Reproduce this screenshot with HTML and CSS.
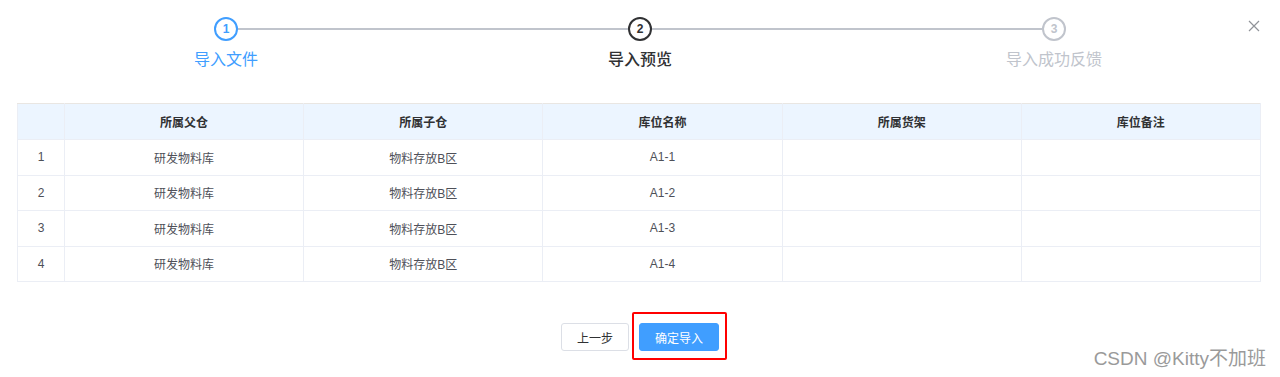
FILE: index.html
```html
<!DOCTYPE html>
<html lang="zh-CN">
<head>
    <meta charset="UTF-8">
    <meta name="viewport" content="width=device-width, initial-scale=1.0">
    <title>导入预览</title>
    <link rel="stylesheet" href="styles.css">
</head>
<body>
    <div class="dialog">
        <button class="close-btn" aria-label="关闭">
            <svg width="12" height="12" viewBox="0 0 12 12">
                <path d="M1 1 L11 11 M11 1 L1 11" stroke="#909399" stroke-width="1.2" fill="none"/>
            </svg>
        </button>

        <div class="steps">
            <div class="step finish">
                <div class="step-head">
                    <div class="step-line"></div>
                    <div class="step-icon">1</div>
                </div>
                <div class="step-title">导入文件</div>
            </div>
            <div class="step process">
                <div class="step-head">
                    <div class="step-line"></div>
                    <div class="step-icon">2</div>
                </div>
                <div class="step-title">导入预览</div>
            </div>
            <div class="step wait">
                <div class="step-head">
                    <div class="step-icon">3</div>
                </div>
                <div class="step-title">导入成功反馈</div>
            </div>
        </div>

        <table class="preview-table">
            <colgroup>
                <col class="col-index">
                <col><col><col><col><col>
            </colgroup>
            <thead>
                <tr>
                    <th></th>
                    <th>所属父仓</th>
                    <th>所属子仓</th>
                    <th>库位名称</th>
                    <th>所属货架</th>
                    <th>库位备注</th>
                </tr>
            </thead>
            <tbody>
                <tr><td>1</td><td>研发物料库</td><td>物料存放B区</td><td>A1-1</td><td></td><td></td></tr>
                <tr><td>2</td><td>研发物料库</td><td>物料存放B区</td><td>A1-2</td><td></td><td></td></tr>
                <tr><td>3</td><td>研发物料库</td><td>物料存放B区</td><td>A1-3</td><td></td><td></td></tr>
                <tr><td>4</td><td>研发物料库</td><td>物料存放B区</td><td>A1-4</td><td></td><td></td></tr>
            </tbody>
        </table>

        <div class="footer-btns">
            <button class="btn">上一步</button>
            <button class="btn btn-primary marked">确定导入</button>
        </div>
    </div>

    <div class="watermark">CSDN @Kitty不加班</div>
</body>
</html>
```

FILE: styles.css
```css
html, body {
    margin: 0;
    padding: 0;
    background: #fff;
    font-family: "Liberation Sans", "Noto Sans CJK SC", sans-serif;
    color: #606266;
}
*, *::before, *::after {
    box-sizing: border-box;
}
.dialog {
    position: relative;
    width: 1280px;
    height: 377px;
    padding: 17px 19px 0 17px;
}
.close-btn {
    position: absolute;
    top: 20px;
    right: 20px;
    width: 12px;
    height: 12px;
    padding: 0;
    border: none;
    background: none;
    line-height: 0;
}

/* steps */
.steps {
    display: flex;
    margin-left: 2px;
}
.step {
    flex: 1 1 0;
    display: flex;
    flex-direction: column;
    align-items: center;
}
.step-head {
    position: relative;
    width: 100%;
    height: 24px;
    display: flex;
    justify-content: center;
}
.step-line {
    position: absolute;
    top: 11px;
    left: 50%;
    right: -50%;
    height: 2px;
    background: #c0c4cc;
}
.step-icon {
    position: relative;
    z-index: 1;
    width: 24px;
    height: 24px;
    border: 2px solid;
    border-radius: 50%;
    background: #fff;
    font-size: 12px;
    font-weight: bold;
    line-height: 20px;
    text-align: center;
}
.step-title {
    font-size: 16px;
    line-height: 38px;
}
.finish .step-icon, .finish .step-title {
    color: #409eff;
    border-color: #409eff;
}
.process .step-icon, .process .step-title {
    color: #303133;
    border-color: #303133;
}
.process .step-title {
    font-weight: 500;
}
.wait .step-icon, .wait .step-title {
    color: #c0c4cc;
    border-color: #c0c4cc;
}

/* table */
.preview-table {
    width: 1244px;
    margin-top: 24px;
    border-collapse: collapse;
    table-layout: fixed;
    font-size: 12px;
}
.col-index {
    width: 47px;
}
.preview-table th, .preview-table td {
    border: 1px solid #ebeef5;
    text-align: center;
    padding: 0 10px;
}
.preview-table th {
    height: 36px;
    background: #ecf5ff;
    color: #303133;
    font-weight: bold;
}
.preview-table thead tr th {
    border-top-color: #e9e6e2;
}
.preview-table td {
    height: 35.5px;
    color: #4e5058;
}

/* buttons */
.footer-btns {
    display: flex;
    justify-content: center;
    gap: 10px;
    margin-top: 41px;
    padding-left: 2px;
}
.btn {
    height: 28px;
    padding: 0 15px;
    border: 1px solid #dcdfe6;
    border-radius: 3px;
    background: #fff;
    color: #303133;
    font-family: inherit;
    font-size: 12px;
}
.btn-primary {
    border-color: #409eff;
    background: #409eff;
    color: #fff;
}
.marked {
    position: relative;
}
.marked::after {
    content: "";
    position: absolute;
    top: -12px;
    bottom: -10px;
    left: -8px;
    right: -9px;
    border: 2px solid #f00;
    border-radius: 2px;
}

.watermark {
    position: absolute;
    right: 14px;
    bottom: 7px;
    color: #9a9a9a;
    font-size: 19px;
}
```
